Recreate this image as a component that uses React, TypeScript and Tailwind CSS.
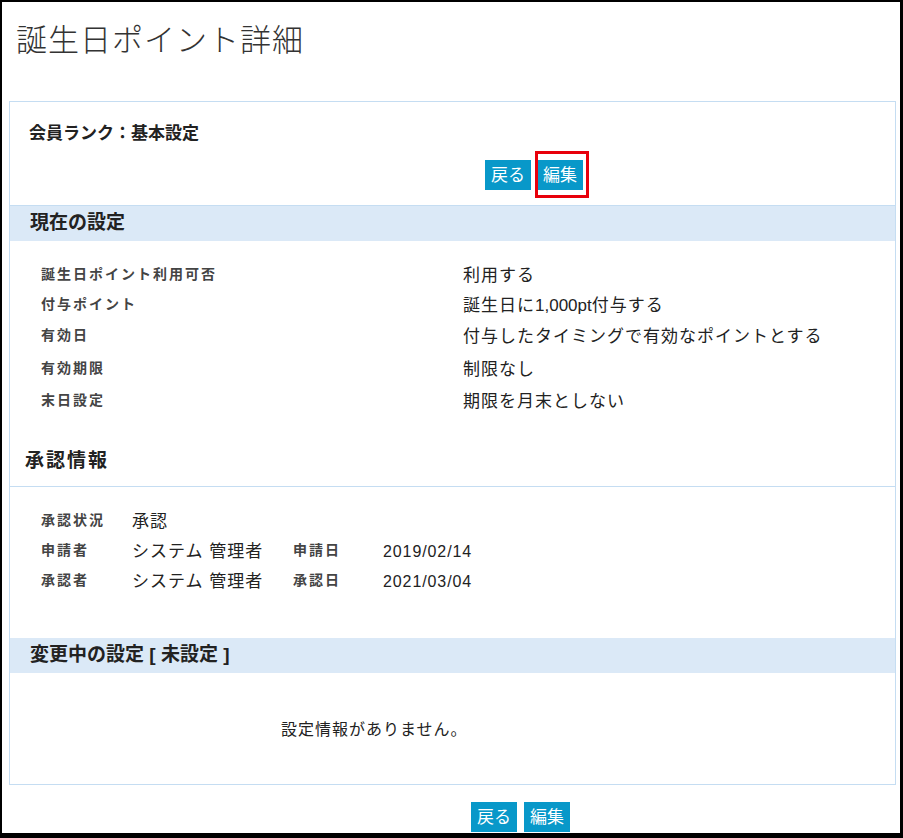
const labelCls = "text-[14px] font-bold tracking-[2px] text-[#444] mb-[3px]";
const valueCls = "text-[17px] tracking-[1px] text-[#222]";

const settings: { label: string; value: React.ReactNode; h: string }[] = [
  { label: "誕生日ポイント利用可否", value: "利用する", h: "h-[30px]" },
  {
    label: "付与ポイント",
    value: (
      <>
        誕生日に<span className="tracking-normal">1,000pt</span>付与する
      </>
    ),
    h: "h-[30px]",
  },
  { label: "有効日", value: "付与したタイミングで有効なポイントとする", h: "h-[32px]" },
  { label: "有効期限", value: "制限なし", h: "h-[34px]" },
  { label: "末日設定", value: "期限を月末としない", h: "h-[30px]" },
];

const Btn = ({ children }: { children: React.ReactNode }) => (
  <div className="w-[46px] h-[30px] flex items-center justify-center bg-[#0898c9] text-white text-[17px] leading-none">
    {children}
  </div>
);

export default function App() {
  return (
    <div className="w-[903px] h-[838px] overflow-hidden bg-white border-black border-t-2 border-l-2 border-r-[3px] border-b-[5px] font-['Liberation_Sans','Noto_Sans_CJK_JP',sans-serif]">
      {/* page title */}
      <h1 className="pt-[19px] pl-[14px] h-[99px] text-[31px] leading-[40px] tracking-[1px] font-light text-[#333]">
        誕生日ポイント詳細
      </h1>

      <div className="ml-[7px] w-[887px] border border-[#c5ddf2]">
        <div className="pt-[20px] pl-[19px] text-[17px] leading-[24px] font-bold text-[#222]">
          会員ランク：基本設定
        </div>
        <div className="flex gap-[6px] ml-[475px] mt-[14px]">
          <Btn>戻る</Btn>
          <div className="relative">
            <Btn>編集</Btn>
            <div className="absolute -left-[2px] -top-[9px] -right-[6px] -bottom-[8px] border-[3px] border-[#e8000b]" />
          </div>
        </div>

        <div className="mt-[15px] h-[36px] bg-[#dbe9f7] border-t border-[#c5ddf2] pl-[20px] flex items-center text-[19px] font-bold text-[#222]">
          現在の設定
        </div>

        <div className="pt-[20px] pl-[31px]">
          {settings.map((s) => (
            <div key={s.label} className={`flex items-center ${s.h}`}>
              <div className={`w-[422px] ${labelCls}`}>{s.label}</div>
              <div className={valueCls}>{s.value}</div>
            </div>
          ))}
        </div>

        <div className="mt-[30px] pl-[15px] pb-[11px] border-b border-[#c5ddf2] text-[19px] leading-[28px] tracking-[2px] font-bold text-[#222]">
          承認情報
        </div>

        <div className="pt-[20px] pl-[31px]">
          <div className="flex items-center h-[30px]">
            <div className={`w-[91px] ${labelCls}`}>承認状況</div>
            <div className={valueCls}>承認</div>
          </div>
          <div className="flex items-center h-[30px]">
            <div className={`w-[91px] ${labelCls}`}>申請者</div>
            <div className={`w-[161px] ${valueCls}`}>システム 管理者</div>
            <div className={`w-[90px] ${labelCls}`}>申請日</div>
            <div className="text-[16px] tracking-[0.9px] text-[#222]">2019/02/14</div>
          </div>
          <div className="flex items-center h-[30px]">
            <div className={`w-[91px] ${labelCls}`}>承認者</div>
            <div className={`w-[161px] ${valueCls}`}>システム 管理者</div>
            <div className={`w-[90px] ${labelCls}`}>承認日</div>
            <div className="text-[16px] tracking-[0.9px] text-[#222]">2021/03/04</div>
          </div>
        </div>

        <div className="mt-[41px] h-[35px] bg-[#dbe9f7] pl-[20px] flex items-center text-[19px] font-bold text-[#222]">
          変更中の設定 [ 未設定 ]
        </div>

        <div className="pt-[45px] pb-[42px] pl-[271px] text-[16px] leading-[24px] tracking-[1px] text-[#222]">
          設定情報がありません。
        </div>
      </div>

      <div className="flex gap-[7px] ml-[469px] mt-[17px]">
        <Btn>戻る</Btn>
        <Btn>編集</Btn>
      </div>
    </div>
  );
}
